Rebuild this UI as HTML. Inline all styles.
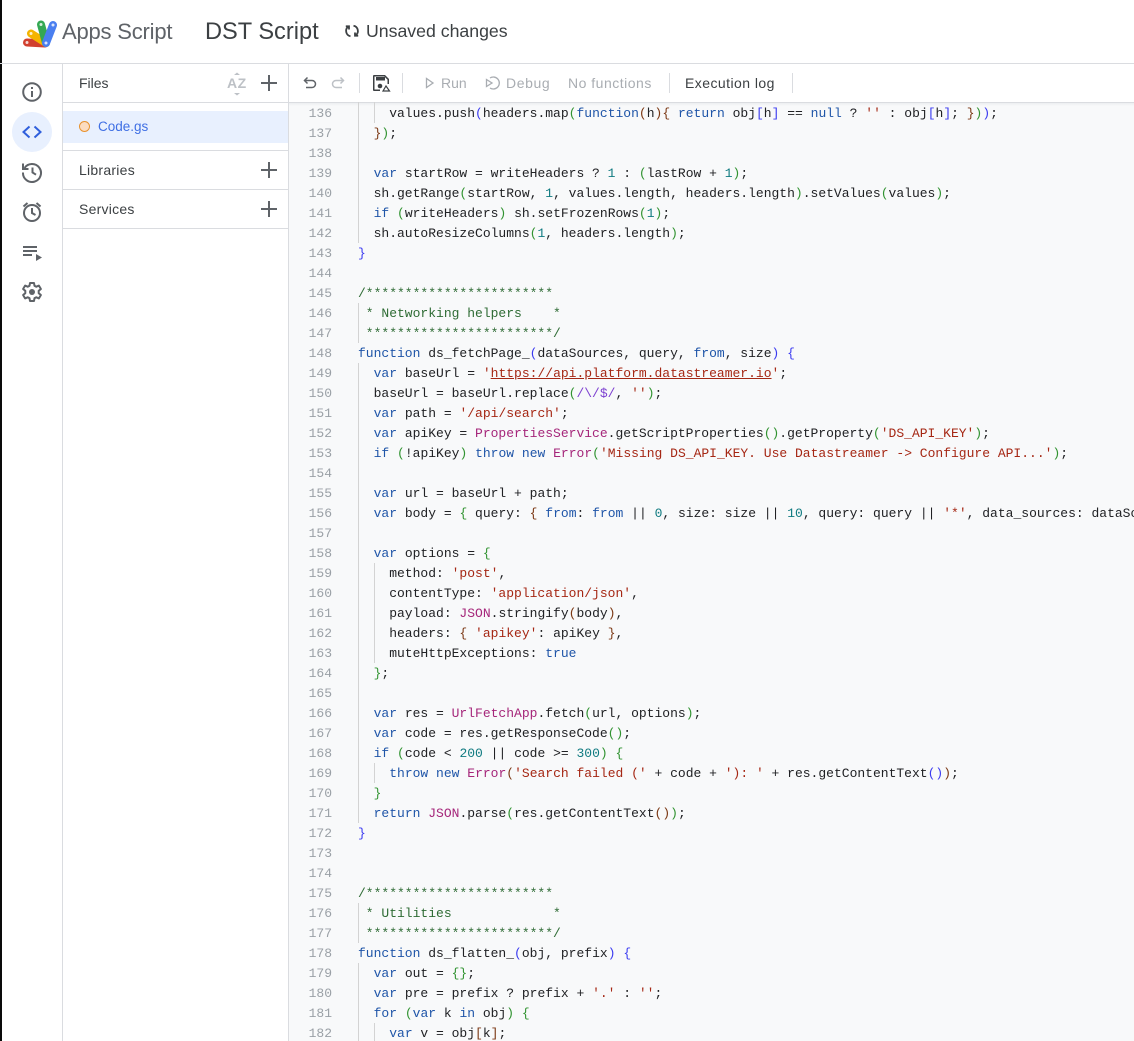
<!DOCTYPE html>
<html><head><meta charset="utf-8"><style>
*{box-sizing:border-box}
html,body{margin:0;padding:0;width:1134px;height:1041px;overflow:hidden;background:#fff;font-family:"Liberation Sans",sans-serif;color:#3c4043}
.a{position:absolute}
.t{position:absolute;white-space:nowrap}
pre{margin:0;font:13px/20px "Liberation Mono",monospace;color:#202124;position:absolute;white-space:pre}
.k{color:#1f55a8}.s{color:#a52714}.c{color:#2e6b34}.n{color:#0f7a80}.m{color:#a5267a}.r{color:#7c3fd0}
.b{color:#3b3bf0}.g{color:#319331}.o{color:#7b3814}
.l{position:absolute;background:#dadce0}
.sep{position:absolute;top:73px;width:1px;height:20px;background:#dadce0}
.gd{position:absolute;width:1px;background:#d3d3d3}
</style></head><body>
<div class="a" style="left:0;top:0;width:2px;height:1041px;background:#0a0a0a"></div>

<svg class="a" style="left:22px;top:18px" width="36" height="30" viewBox="0 0 36 30">
<g stroke-linecap="round" fill="none">
<path d="M5 24.500L23 25.500" stroke="#d1402f" stroke-width="8"/>
<path d="M9 15.500L24 25" stroke="#f4b400" stroke-width="8"/>
<path d="M19 6.500L24 25" stroke="#34a853" stroke-width="8"/>
<path d="M31 7L24 25" stroke="#4a7ff0" stroke-width="8"/>
</g>
<circle cx="5" cy="24.500" r="1.500" fill="#fff" opacity=".8"/><circle cx="9" cy="15.500" r="1.500" fill="#fff" opacity=".8"/><circle cx="19" cy="6.500" r="1.500" fill="#fff" opacity=".8"/><circle cx="31" cy="7" r="1.500" fill="#fff" opacity=".8"/><circle cx="24" cy="25" r="1.500" fill="#fff" opacity=".8"/>
</svg>
<div class="t" style="left:62px;top:18px;font-size:22px;line-height:28px;color:#5f6368;letter-spacing:-.2px">Apps Script</div>
<div class="t" style="left:205px;top:17px;font-size:23.600px;line-height:30px;color:#3c4043">DST Script</div>
<svg class="a" style="left:344px;top:23px" width="16" height="16" viewBox="0 0 16 16" fill="none" stroke="#3c4043" stroke-width="1.800"><path d="M6.500 13.200A5.300 5.300 0 0 1 4.300 3.700"/><path d="M9.500 2.800A5.300 5.300 0 0 1 11.700 12.300"/><path d="M1.800 3.300H5V6.500" /><path d="M14.200 12.700H11V9.500"/></svg>
<div class="t" style="left:366px;top:20px;font-size:17.700px;line-height:22px;color:#3c4043">Unsaved changes</div>

<div class="l" style="left:0;top:63px;width:1134px;height:1px"></div>
<div class="l" style="left:62px;top:64px;width:1px;height:977px"></div>
<div class="l" style="left:288px;top:64px;width:1px;height:977px"></div>

<svg class="a" style="left:20px;top:80px" width="24" height="24" viewBox="0 0 24 24" fill="none" stroke="#5f6368" stroke-width="2"><circle cx="12" cy="12" r="8.800"/><path d="M12 11v6"/><path d="M12 7v2"/></svg>
<div class="a" style="left:12px;top:112px;width:40px;height:40px;border-radius:50%;background:#e8f0fe"></div>
<svg class="a" style="left:20px;top:120px" width="24" height="24" viewBox="0 0 24 24" fill="none" stroke="#2f5fdc" stroke-width="2"><path d="M9.500 6.500L3.500 12l6 5.500"/><path d="M14.500 6.500l6 5.500-6 5.500"/></svg>
<svg class="a" style="left:20px;top:160px" width="24" height="24" viewBox="0 0 24 24" fill="none" stroke="#5f6368" stroke-width="2"><path d="M4.500 8A9 9 0 1 1 3 12.500"/><path d="M3 3.500V9h5.500" /><path d="M12.500 7.500V12.500l3.500 2.200"/></svg>
<svg class="a" style="left:20px;top:200px" width="24" height="24" viewBox="0 0 24 24" fill="none" stroke="#5f6368" stroke-width="2"><circle cx="12" cy="13" r="8"/><path d="M12 8v5l3.500 2"/><path d="M3.500 6.500L7.500 3"/><path d="M20.500 6.500L16.500 3"/></svg>
<svg class="a" style="left:20px;top:240px" width="24" height="24" viewBox="0 0 24 24"><path d="M3 6h14v2H3zM3 10h14v2H3zM3 14h9v2H3z" fill="#5f6368"/><path d="M16 14l6 3.500-6 3.500z" fill="#5f6368"/></svg>
<svg class="a" style="left:20px;top:280px" width="24" height="24" viewBox="0 0 24 24" fill="none" stroke="#5f6368" stroke-width="2"><path d="M10 3h4l.5 2.800 1.800.9 2.600-1.100 2 3.400-2.200 1.800v2.400l2.200 1.800-2 3.400-2.600-1.100-1.800.9L14 21h-4l-.5-2.800-1.800-.9-2.600 1.100-2-3.400 2.200-1.800v-2.400L3.100 9l2-3.400 2.600 1.100 1.800-.9z" stroke-linejoin="round"/><circle cx="12" cy="12" r="3" fill="#5f6368" stroke="none"/></svg>

<div class="t" style="left:79px;top:74px;font-size:14px;line-height:18px;color:#3c4043">Files</div>
<div class="t" style="left:227px;top:75px;font-size:14px;line-height:17px;font-weight:bold;color:#bdc1c6;letter-spacing:.5px">AZ</div>
<svg class="a" style="left:233px;top:72px" width="8" height="24" viewBox="0 0 8 24" fill="#bdc1c6"><path d="M1 3l3-2.500L7 3zM1 21l3 2.500L7 21z"/></svg>
<svg class="a" style="left:260px;top:74px" width="18" height="18" fill="#5f6368"><path d="M8 1h2v7h7v2h-7v7H8v-7H1V8h7z"/></svg>
<div class="l" style="left:63px;top:102px;width:225px;height:1px"></div>
<div class="a" style="left:63px;top:111px;width:225px;height:32px;background:#e8f0fe"></div>
<div class="a" style="left:79px;top:121px;width:11px;height:11px;border-radius:50%;background:#fcdcc0;border:1px solid #e8922e"></div>
<div class="t" style="left:98px;top:118px;font-size:13.500px;line-height:18px;color:#3f6fe4">Code.gs</div>
<div class="l" style="left:63px;top:150px;width:225px;height:1px"></div>
<div class="t" style="left:79px;top:161px;font-size:14px;line-height:18px;color:#3c4043;letter-spacing:.25px">Libraries</div>
<svg class="a" style="left:260px;top:161px" width="18" height="18" fill="#5f6368"><path d="M8 1h2v7h7v2h-7v7H8v-7H1V8h7z"/></svg>
<div class="l" style="left:63px;top:189px;width:225px;height:1px"></div>
<div class="t" style="left:79px;top:200px;font-size:14px;line-height:18px;color:#3c4043;letter-spacing:.25px">Services</div>
<svg class="a" style="left:260px;top:200px" width="18" height="18" fill="#5f6368"><path d="M8 1h2v7h7v2h-7v7H8v-7H1V8h7z"/></svg>
<div class="l" style="left:63px;top:228px;width:225px;height:1px"></div>

<svg class="a" style="left:302px;top:75px" width="16" height="16" viewBox="0 0 16 16" fill="none" stroke="#5f6368" stroke-width="1.500"><path d="M5.500 2.500L2.500 5.500l3 3"/><path d="M2.500 5.500H10a3.300 3.300 0 0 1 0 7H4"/></svg>
<svg class="a" style="left:330px;top:75px" width="16" height="16" viewBox="0 0 16 16" fill="none" stroke="#bdc1c6" stroke-width="1.500"><path d="M10.500 2.500l3 3-3 3"/><path d="M13.500 5.500H6a3.300 3.300 0 0 0 0 7h6"/></svg>
<div class="sep" style="left:359px"></div>
<svg class="a" style="left:371px;top:73px" width="20" height="20" viewBox="0 0 20 20"><path d="M2 3a1 1 0 0 1 1-1h11l4 4v5h-1.500V6.700L13.300 3.500H3.500v13H9V18H3a1 1 0 0 1-1-1z" fill="#3c4043"/><rect x="5" y="4" width="9" height="3.500" fill="#3c4043"/><circle cx="9" cy="13" r="2.300" fill="#3c4043"/><path d="M12 18l3-5 3.500 5z" fill="none" stroke="#3c4043" stroke-width="1.200"/></svg>
<div class="sep" style="left:402px"></div>
<svg class="a" style="left:423px;top:76px" width="14" height="14" viewBox="0 0 14 14" fill="none" stroke="#a9adb2" stroke-width="1.300"><path d="M3.500 2.500v9l6.500-4.500z"/></svg>
<div class="t" style="left:441px;top:74px;font-size:14px;line-height:18px;color:#a9adb2">Run</div>
<svg class="a" style="left:485px;top:74px" width="18" height="18" viewBox="0 0 18 18" fill="none" stroke="#a9adb2" stroke-width="1.300"><path d="M1.500 5.500v7L7 9z"/><path d="M5 4A6 6 0 1 1 5 14"/></svg>
<div class="t" style="left:506px;top:74px;font-size:14px;line-height:18px;color:#a9adb2;letter-spacing:.6px">Debug</div>
<div class="t" style="left:568px;top:74px;font-size:14px;line-height:18px;color:#a9adb2;letter-spacing:.5px">No functions</div>
<div class="sep" style="left:669px"></div>
<div class="t" style="left:685px;top:74px;font-size:14px;line-height:18px;color:#3c4043;letter-spacing:.45px">Execution log</div>
<div class="sep" style="left:792px"></div>

<div class="a" style="left:289px;top:102px;width:845px;height:939px;background:#f8f9fa;overflow:hidden">
<div class="a" style="left:0;top:0;width:845px;height:1px;background:#dadce0"></div>
<div class="a" style="left:0;top:1px;width:845px;height:3px;background:linear-gradient(#eceef0,#f8f9fa)"></div>
<div class="gd" style="left:69px;top:0;height:141px"></div>
<div class="gd" style="left:85px;top:0;height:21px"></div>
<div class="gd" style="left:69px;top:201px;height:40px"></div>
<div class="gd" style="left:69px;top:261px;height:460px"></div>
<div class="gd" style="left:85px;top:461px;height:100px"></div>
<div class="gd" style="left:85px;top:661px;height:20px"></div>
<div class="gd" style="left:69px;top:801px;height:40px"></div>
<div class="gd" style="left:69px;top:861px;height:80px"></div>
<div class="gd" style="left:85px;top:921px;height:20px"></div>
<pre style="left:19px;top:2px;width:24px;text-align:right;color:#9aa0a6">136
137
138
139
140
141
142
143
144
145
146
147
148
149
150
151
152
153
154
155
156
157
158
159
160
161
162
163
164
165
166
167
168
169
170
171
172
173
174
175
176
177
178
179
180
181
182</pre>
<pre style="left:69px;top:2px">    values.push<span class="b">(</span>headers.map<span class="g">(</span><span class="k">function</span><span class="o">(</span>h<span class="o">){</span> <span class="k">return</span> obj<span class="b">[</span>h<span class="b">]</span> == <span class="k">null</span> ? <span class="s">''</span> : obj<span class="b">[</span>h<span class="b">]</span>; <span class="o">}</span><span class="g">)</span><span class="b">)</span>;
  <span class="o">}</span><span class="g">)</span>;

  <span class="k">var</span> startRow = writeHeaders ? <span class="n">1</span> : <span class="g">(</span>lastRow + <span class="n">1</span><span class="g">)</span>;
  sh.getRange<span class="g">(</span>startRow, <span class="n">1</span>, values.length, headers.length<span class="g">)</span>.setValues<span class="g">(</span>values<span class="g">)</span>;
  <span class="k">if</span> <span class="g">(</span>writeHeaders<span class="g">)</span> sh.setFrozenRows<span class="g">(</span><span class="n">1</span><span class="g">)</span>;
  sh.autoResizeColumns<span class="g">(</span><span class="n">1</span>, headers.length<span class="g">)</span>;
<span class="b">}</span>

<span class="c">/************************
 * Networking helpers    *
 ************************/</span>
<span class="k">function</span> ds_fetchPage_<span class="b">(</span>dataSources, query, <span class="k">from</span>, size<span class="b">)</span> <span class="b">{</span>
  <span class="k">var</span> baseUrl = <span class="s">'<span style="text-decoration:underline">https://api.platform.datastreamer.io</span>'</span>;
  baseUrl = baseUrl.replace<span class="g">(</span><span class="r">/\/$/</span>, <span class="s">''</span><span class="g">)</span>;
  <span class="k">var</span> path = <span class="s">'/api/search'</span>;
  <span class="k">var</span> apiKey = <span class="m">PropertiesService</span>.getScriptProperties<span class="g">()</span>.getProperty<span class="g">(</span><span class="s">'DS_API_KEY'</span><span class="g">)</span>;
  <span class="k">if</span> <span class="g">(</span>!apiKey<span class="g">)</span> <span class="k">throw</span> <span class="k">new</span> <span class="m">Error</span><span class="g">(</span><span class="s">'Missing DS_API_KEY. Use Datastreamer -&gt; Configure API...'</span><span class="g">)</span>;

  <span class="k">var</span> url = baseUrl + path;
  <span class="k">var</span> body = <span class="g">{</span> query: <span class="o">{</span> <span class="k">from</span>: <span class="k">from</span> || <span class="n">0</span>, size: size || <span class="n">10</span>, query: query || <span class="s">'*'</span>, data_sources: dataSources <span class="o">}</span> <span class="g">}</span>;

  <span class="k">var</span> options = <span class="g">{</span>
    method: <span class="s">'post'</span>,
    contentType: <span class="s">'application/json'</span>,
    payload: <span class="m">JSON</span>.stringify<span class="o">(</span>body<span class="o">)</span>,
    headers: <span class="o">{</span> <span class="s">'apikey'</span>: apiKey <span class="o">}</span>,
    muteHttpExceptions: <span class="k">true</span>
  <span class="g">}</span>;

  <span class="k">var</span> res = <span class="m">UrlFetchApp</span>.fetch<span class="g">(</span>url, options<span class="g">)</span>;
  <span class="k">var</span> code = res.getResponseCode<span class="g">()</span>;
  <span class="k">if</span> <span class="g">(</span>code &lt; <span class="n">200</span> || code &gt;= <span class="n">300</span><span class="g">)</span> <span class="g">{</span>
    <span class="k">throw</span> <span class="k">new</span> <span class="m">Error</span><span class="o">(</span><span class="s">'Search failed ('</span> + code + <span class="s">'): '</span> + res.getContentText<span class="b">()</span><span class="o">)</span>;
  <span class="g">}</span>
  <span class="k">return</span> <span class="m">JSON</span>.parse<span class="g">(</span>res.getContentText<span class="o">()</span><span class="g">)</span>;
<span class="b">}</span>


<span class="c">/************************
 * Utilities             *
 ************************/</span>
<span class="k">function</span> ds_flatten_<span class="b">(</span>obj, prefix<span class="b">)</span> <span class="b">{</span>
  <span class="k">var</span> out = <span class="g">{}</span>;
  <span class="k">var</span> pre = prefix ? prefix + <span class="s">'.'</span> : <span class="s">''</span>;
  <span class="k">for</span> <span class="g">(</span><span class="k">var</span> k <span class="k">in</span> obj<span class="g">)</span> <span class="g">{</span>
    <span class="k">var</span> v = obj<span class="o">[</span>k<span class="o">]</span>;</pre>
</div>
</body></html>
